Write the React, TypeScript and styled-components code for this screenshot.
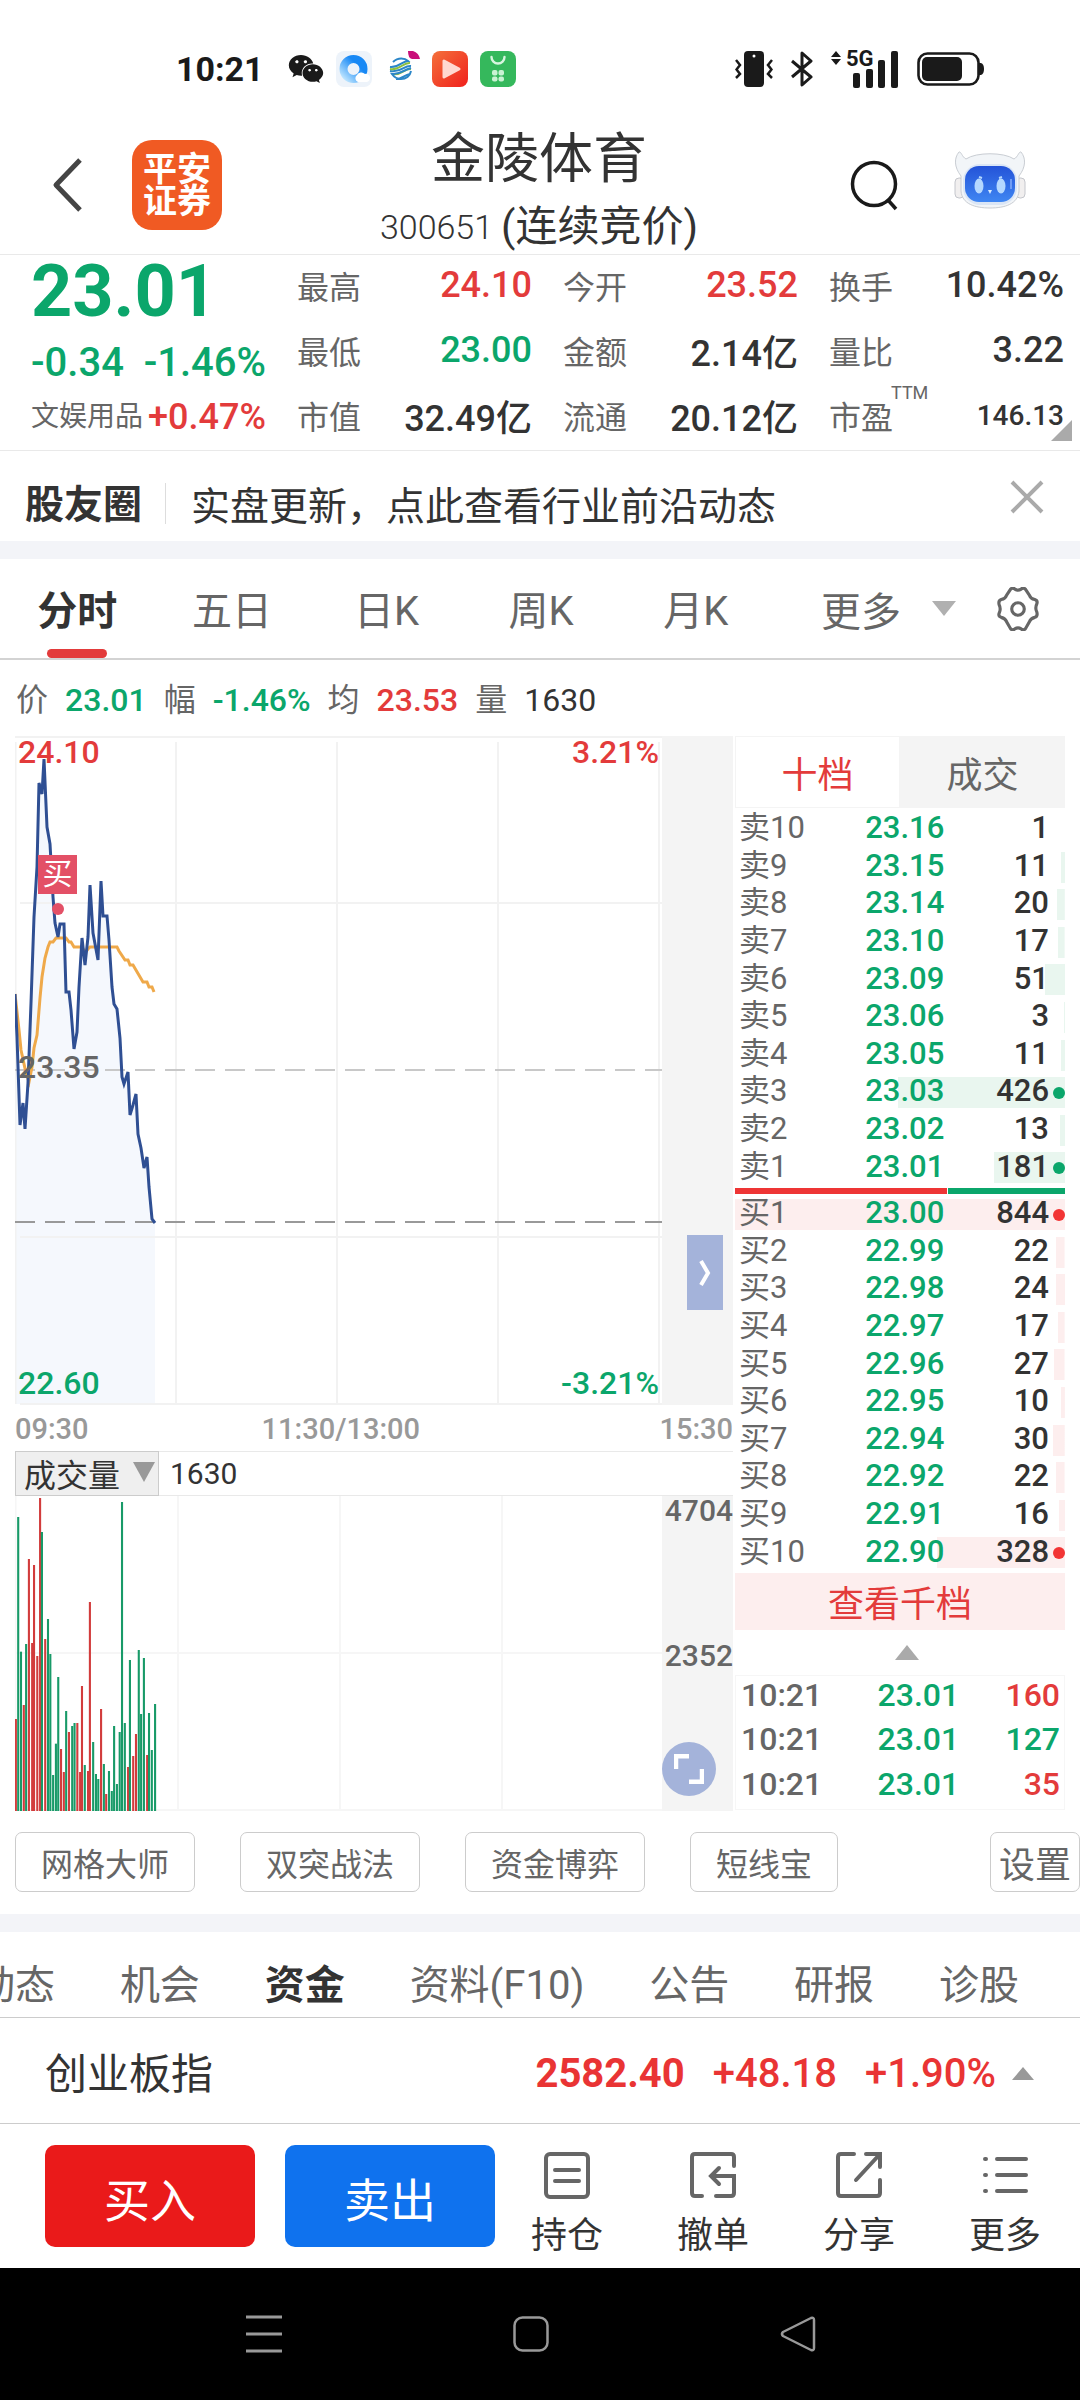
import React from "react";
import styled, { createGlobalStyle } from "styled-components";
import { FaWeixin } from "react-icons/fa";

const c = {
  green: "#0ba66b",
  red: "#e33b3b",
  ink: "#333333",
  sub: "#666666",
  mute: "#999999",
  line: "#e9e9e9",
  band: "#f3f4f8",
  panel: "#f4f4f4",
};

const Global = createGlobalStyle`
  * { box-sizing: border-box; }
  body { margin: 0; background: #fff; }
  body, button, select {
    font-family: Roboto, "Noto Sans CJK SC", sans-serif;
    color: ${c.ink};
  }
  button { border: 0; padding: 0; background: none; cursor: pointer; }
  svg { display: block; flex: none; }
`;

const Page = styled.div`
  display: flex;
  flex-direction: column;
  overflow: hidden;
`;

/* ---------- status bar ---------- */
const StatusBar = styled.div`
  display: flex;
  align-items: center;
  justify-content: space-between;
  padding: 24px 96px 0 176px;
  height: 114px;
`;
const StatusGroup = styled.div`
  display: flex;
  align-items: center;
  gap: ${(p: { $gap: number }) => p.$gap}px;
`;
const Clock = styled.span`
  font-size: 34px;
  font-weight: 700;
  color: #1a1a1a;
  margin-right: 12px;
`;

/* ---------- header ---------- */
const Header = styled.header`
  display: grid;
  grid-template-columns: 1fr auto 1fr;
  align-items: center;
  padding: 3px 54px 2px 52px;
  border-bottom: 1px solid ${c.line};
`;
const HeaderSide = styled.div`
  display: flex;
  align-items: center;
  justify-content: ${(p: { $end?: boolean }) => (p.$end ? "flex-end" : "flex-start")};
  gap: ${(p: { $end?: boolean }) => (p.$end ? 54 : 50)}px;
`;
const Brand = styled.a`
  width: 90px;
  height: 90px;
  border-radius: 20px;
  background: #f05a23;
  color: #fff;
  font-size: 34px;
  line-height: 32px;
  font-weight: 700;
  text-decoration: none;
  text-align: center;
  padding: 13px 9px;
`;
const Heading = styled.div`
  text-align: center;
  padding-top: 10px;
`;
const StockName = styled.h1`
  margin: 0 0 9px;
  font-size: 54px;
  line-height: 66px;
  font-weight: 400;
`;
const StockCode = styled.p`
  margin: 0;
  display: flex;
  align-items: center;
  gap: 8px;
  font-size: 42px;
  line-height: 50px;
`;
const CodeDigits = styled.span`
  font-size: 34px;
  font-weight: 300;
`;

/* ---------- quote ---------- */
const Quote = styled.section`
  display: grid;
  grid-template-columns: repeat(4, 1fr);
  column-gap: 31px;
  padding: 0 16px 5px 31px;
  border-bottom: 1px solid ${c.line};
`;
const QuoteColumn = styled.dl`
  margin: 0;
  display: grid;
  grid-auto-rows: 60px;
  row-gap: 5px;
`;
const QuoteItem = styled.div`
  position: relative;
  display: flex;
  align-items: center;
  justify-content: space-between;
  white-space: nowrap;
`;
const QuoteLabel = styled.dt`
  font-size: 32px;
  color: ${c.sub};
`;
const QuoteValue = styled.dd<{ $color?: string; $small?: boolean }>`
  margin: 0;
  font-size: ${(p) => (p.$small ? 28 : 36)}px;
  font-weight: 500;
  color: ${(p) => p.$color || c.ink};
`;
const Ttm = styled.sup`
  position: absolute;
  left: 62px;
  top: -4px;
  font-size: 18px;
  line-height: 24px;
  color: ${c.sub};
`;
const Corner = styled.svg`
  position: absolute;
  right: -8px;
  bottom: 4px;
`;
const Price = styled.div`
  font-size: 72px;
  line-height: 74px;
  font-weight: 700;
  color: ${c.green};
`;
const Change = styled.div`
  display: flex;
  justify-content: space-between;
  font-size: 40px;
  line-height: 68px;
  font-weight: 500;
  color: ${c.green};
`;
const Sector = styled.div`
  display: flex;
  align-items: center;
  justify-content: space-between;
  font-size: 28px;
  line-height: 40px;
  color: ${c.sub};
  white-space: nowrap;
`;
const SectorChange = styled.span`
  font-size: 36px;
  font-weight: 500;
  color: ${c.red};
`;

/* ---------- notice ---------- */
const Notice = styled.section`
  display: flex;
  align-items: center;
  height: 90px;
  padding: 14px 36px 0 25px;
  font-size: 39px;
`;
const NoticeTitle = styled.strong`
  padding: 3px 23px 0 0;
  line-height: 38px;
  border-right: 1px solid #dddddd;
`;
const NoticeText = styled.a`
  flex: 1;
  padding-left: 25px;
  color: inherit;
  text-decoration: none;
`;
const Close = styled.button`
  padding-bottom: 12px;
`;
const Band = styled.div`
  height: 18px;
  background: ${c.band};
`;

/* ---------- period tabs ---------- */
const PeriodBar = styled.nav`
  display: grid;
  grid-template-columns: 773fr 307fr;
  height: 101px;
  border-bottom: 2px solid #d3d3d3;
`;
const Periods = styled.div`
  display: grid;
  grid-template-columns: repeat(5, 1fr);
`;
const Period = styled.button<{ $on?: boolean }>`
  position: relative;
  padding-bottom: 2px;
  font-size: 40px;
  font-weight: ${(p) => (p.$on ? 700 : 400)};
  color: ${(p) => (p.$on ? c.ink : c.sub)};
  &::after {
    content: "";
    display: ${(p) => (p.$on ? "block" : "none")};
    position: absolute;
    left: 50%;
    bottom: 0;
    width: 60px;
    height: 9px;
    margin-left: -30px;
    border-radius: 5px;
    background: ${c.red};
  }
`;
const PeriodExtra = styled.div`
  display: flex;
  align-items: center;
  justify-content: space-between;
  padding: 0 40px 0 48px;
`;
const MoreButton = styled.button`
  display: flex;
  align-items: center;
  gap: 31px;
  font-size: 40px;
  color: ${c.sub};
`;

/* ---------- legend ---------- */
const Legend = styled.div`
  display: flex;
  gap: 17px;
  padding: 3px 16px 0;
  font-size: 32px;
  line-height: 74px;
  height: 76px;
  color: ${c.sub};
`;
const LegendValue = styled.span<{ $color: string; $plain?: boolean }>`
  font-weight: ${(p) => (p.$plain ? 400 : 500)};
  color: ${(p) => p.$color};
`;

/* ---------- charts ---------- */
const Board = styled.main`
  display: grid;
  grid-template-columns: 718fr 330fr;
  column-gap: 2px;
  padding: 0 15px;
`;
const ChartColumn = styled.section`
  display: flex;
  flex-direction: column;
  min-width: 0;
`;
const Plot = styled.div<{ $h: number }>`
  position: relative;
  display: grid;
  grid-template-columns: 647fr 71fr;
  height: ${(p) => p.$h}px;
`;
const PlotSvg = styled.svg`
  width: 100%;
  height: 100%;
`;
const Gutter = styled.div`
  position: relative;
  background: ${c.panel};
`;
const AxisLabel = styled.span<{ $top: number; $color: string; $right?: boolean }>`
  position: absolute;
  top: ${(p) => p.$top}px;
  ${(p) => (p.$right ? "right: 74px;" : "left: 3px;")}
  font-size: 32px;
  line-height: 32px;
  font-weight: 500;
  color: ${(p) => p.$color};
`;
const BuyMark = styled.span`
  position: absolute;
  left: 23px;
  top: 119px;
  width: 39px;
  height: 39px;
  background: #e35066;
  color: #fff;
  font-size: 30px;
  line-height: 38px;
  text-align: center;
`;
const Expander = styled.button`
  position: absolute;
  right: 10px;
  top: 499px;
  width: 36px;
  height: 75px;
  background: #a4b3da;
  display: grid;
  place-items: center;
`;
const FullScreen = styled.button`
  position: absolute;
  left: 0;
  bottom: 15px;
  width: 54px;
  height: 54px;
  border-radius: 50%;
  background: #a4b3da;
  display: grid;
  place-items: center;
`;
const TimeAxis = styled.div`
  display: grid;
  grid-template-columns: auto 1fr auto;
  font-size: 29px;
  line-height: 46px;
  padding-top: 1px;
  font-weight: 500;
  color: ${c.mute};
`;
const Noon = styled.span`
  padding-left: 173px;
`;
const VolumeBar = styled.div`
  display: flex;
  align-items: center;
  height: 45px;
  border: 1px solid ${c.line};
  border-width: 1px 0;
  font-size: 30px;
  gap: 11px;
  margin-top: -1px;
`;
const Picker = styled.label`
  position: relative;
  display: block;
  margin: -1px 0;
`;
const PickerSelect = styled.select`
  appearance: none;
  display: block;
  width: 144px;
  height: 45px;
  padding: 4px 0 0 8px;
  border: 1px solid #cccccc;
  border-radius: 0;
  background: #efefef;
  font-size: 32px;
  line-height: 38px;
`;
const PickerArrow = styled.svg`
  position: absolute;
  right: 4px;
  top: 11px;
  pointer-events: none;
`;
const ScaleLabel = styled.span<{ $top: number }>`
  position: absolute;
  right: 0;
  top: ${(p) => p.$top}px;
  font-size: 30px;
  line-height: 30px;
  font-weight: 500;
  color: ${c.sub};
`;

/* ---------- order book ---------- */
const BookColumn = styled.section`
  display: flex;
  flex-direction: column;
`;
const BookTabs = styled.div`
  display: grid;
  grid-template-columns: 1fr 1fr;
  height: 72px;
  margin-bottom: 3px;
`;
const BookTab = styled.button<{ $on?: boolean }>`
  border: 1px solid ${c.panel};
  background: ${(p) => (p.$on ? "#fff" : c.panel)};
  color: ${(p) => (p.$on ? c.red : c.sub)};
  font-size: 36px;
`;
const Ladder = styled.table`
  width: 100%;
  height: 376px;
  border-collapse: collapse;
  table-layout: fixed;
`;
const Level = styled.tr`
  background-repeat: no-repeat;
  background-position: right 3px;
`;
const Cell = styled.td<{ $align?: string; $color?: string; $plain?: boolean }>`
  padding: 0 0 4px 4px;
  font-size: 31px;
  line-height: 31px;
  text-align: ${(p) => p.$align || "left"};
  font-weight: ${(p) => (p.$plain ? 400 : 500)};
  color: ${(p) => p.$color || c.ink};
`;
const DotCell = styled.td`
  width: 16px;
  padding: 0;
`;
const Dot = styled.i<{ $color: string }>`
  display: block;
  margin-left: auto;
  width: 12px;
  height: 12px;
  border-radius: 50%;
  background: ${(p) => p.$color};
`;
const Ratio = styled.div`
  display: grid;
  grid-template-columns: 212fr 117fr;
  gap: 1px;
  height: 6px;
  margin: 1px 0 2px;
`;
const RatioPart = styled.span<{ $color: string }>`
  background: ${(p) => p.$color};
`;
const DepthButton = styled.button`
  height: 57px;
  margin-top: 1px;
  padding-top: 6px;
  background: #fdeeee;
  color: ${c.red};
  font-size: 36px;
  line-height: 50px;
`;
const Fold = styled.button`
  display: grid;
  place-items: center;
  height: 45px;
  padding-left: 14px;
`;
const Trades = styled.table`
  width: 100%;
  height: 135px;
  border: 1px solid #f6f6f6;
  border-spacing: 0;
`;
const TradeCell = styled.td<{ $align?: string; $color: string }>`
  padding: 0 4px 6px 5px;
  font-size: 32px;
  line-height: 32px;
  font-weight: 500;
  text-align: ${(p) => p.$align || "left"};
  color: ${(p) => p.$color};
`;

/* ---------- tools ---------- */
const Tools = styled.div`
  display: flex;
  gap: 45px;
  padding: 21px 0 22px 15px;
`;
const Tool = styled.button`
  height: 60px;
  padding: 0 25px;
  border: 1px solid #cccccc;
  border-radius: 7px;
  font-size: 32px;
  color: ${c.sub};
  white-space: nowrap;
`;
const SettingsTool = styled(Tool)`
  margin-left: auto;
  padding: 0 8px;
  font-size: 36px;
`;

/* ---------- section tabs ---------- */
const SectionTabs = styled.nav`
  display: flex;
  justify-content: space-between;
  margin-left: -25px;
  padding: 4px 61px 0 0;
  height: 86px;
  border-bottom: 1px solid #cccccc;
`;
const SectionTab = styled.button<{ $on?: boolean }>`
  padding-top: 10px;
  font-size: 40px;
  white-space: nowrap;
  font-weight: ${(p) => (p.$on ? 700 : 400)};
  color: ${(p) => (p.$on ? c.ink : c.sub)};
`;

/* ---------- index strip ---------- */
const IndexStrip = styled.section`
  display: flex;
  align-items: center;
  gap: 28px;
  height: 106px;
  padding: 5px 46px 0 45px;
  border-bottom: 1px solid #cccccc;
  font-size: 40px;
  font-weight: 500;
  color: #e93434;
`;
const IndexName = styled.span`
  flex: 1;
  padding-bottom: 6px;
  font-size: 42px;
  font-weight: 400;
  color: ${c.ink};
`;
const IndexValue = styled.strong`
  font-weight: 700;
`;
const IndexRate = styled.span`
  display: flex;
  align-items: center;
  gap: 16px;
`;

/* ---------- action bar ---------- */
const ActionBar = styled.footer`
  display: grid;
  grid-template-columns: 210fr 210fr 540fr;
  column-gap: 30px;
  align-items: start;
  padding: 21px 15px 9px 45px;
`;
const Deal = styled.button<{ $color: string }>`
  height: 102px;
  padding-top: 2px;
  border-radius: 10px;
  background: ${(p) => p.$color};
  color: #fff;
  font-size: 46px;
`;
const Actions = styled.div`
  display: flex;
  gap: 74px;
  padding-left: 6px;
`;
const Action = styled.button`
  display: flex;
  flex-direction: column;
  align-items: center;
  gap: 14px;
  padding-top: 6px;
  font-size: 36px;
  line-height: 46px;
  white-space: nowrap;
`;

/* ---------- system navigation ---------- */
const SystemNav = styled.div`
  display: flex;
  justify-content: center;
  align-items: center;
  gap: 231px;
  height: 132px;
  padding-right: 18px;
  background: #000;
`;

/* ---------- data ---------- */
const sells: [string, string, number][] = [
  ["卖10", "23.16", 1], ["卖9", "23.15", 11], ["卖8", "23.14", 20], ["卖7", "23.10", 17],
  ["卖6", "23.09", 51], ["卖5", "23.06", 3], ["卖4", "23.05", 11], ["卖3", "23.03", 426],
  ["卖2", "23.02", 13], ["卖1", "23.01", 181],
];
const buys: [string, string, number][] = [
  ["买1", "23.00", 844], ["买2", "22.99", 22], ["买3", "22.98", 24], ["买4", "22.97", 17],
  ["买5", "22.96", 27], ["买6", "22.95", 10], ["买7", "22.94", 30], ["买8", "22.92", 22],
  ["买9", "22.91", 16], ["买10", "22.90", 328],
];
const MAX_LOT = 844;

const quoteColumns = [
  [["最高", "24.10", c.red], ["最低", "23.00", c.green], ["市值", "32.49亿", c.ink]],
  [["今开", "23.52", c.red], ["金额", "2.14亿", c.ink], ["流通", "20.12亿", c.ink]],
  [["换手", "10.42%", c.ink], ["量比", "3.22", c.ink], ["市盈", "146.13", c.ink]],
];

const pricePath =
  "0,258 2,301 5,389 8,367 10,393 13,347 16,267 19,181 22,131 24,47 27,58 29,23 32,91 35,108 38,161 40,187 43,201 45,188 49,188 51,256 54,256 56,274 59,313 62,296 64,251 67,202 70,229 73,201 75,149 78,197 83,224 86,145 88,180 92,180 94,204 97,251 99,268 102,273 105,302 107,341 109,348 113,336 115,379 118,369 121,358 123,398 126,412 129,432 132,421 134,451 137,483 140,487";
const averagePath =
  "0,258 4,294 6,314 11,337 14,346 17,331 19,312 22,299 25,262 27,241 30,222 33,211 35,206 38,206 41,202 51,202 54,206 56,206 59,211 67,211 70,217 73,213 75,211 102,211 104,215 110,224 113,224 115,229 118,229 128,246 132,246 134,251 137,251 139,256";

// Minute volumes: centre x, top y and direction of each bar.
const volumes: [number, number, 0 | 1][] = [
  [34, 864, 1], [39, 258, 0], [45, 662, 0], [51, 822, 1], [56, 639, 0], [62, 384, 1], [69, 636, 1],
  [73, 402, 1], [80, 675, 1], [86, 201, 1], [90, 303, 0], [97, 624, 1], [103, 564, 0], [108, 669, 0],
  [114, 1032, 0], [120, 938, 0], [125, 738, 0], [131, 954, 1], [137, 1023, 1], [142, 840, 0],
  [148, 903, 1], [155, 885, 0], [160, 876, 0], [166, 876, 1], [172, 1023, 1], [176, 765, 1],
  [182, 1002, 0], [189, 1020, 1], [193, 513, 1], [200, 933, 0], [206, 1029, 0], [211, 1044, 0],
  [217, 834, 1], [223, 999, 0], [228, 1089, 1], [234, 1020, 0], [240, 1080, 0], [245, 885, 0],
  [251, 1059, 0], [257, 903, 0], [262, 213, 0], [268, 876, 0], [275, 1008, 1], [279, 687, 0],
  [286, 975, 1], [292, 909, 1], [298, 657, 0], [303, 849, 0], [309, 681, 0], [316, 972, 1],
  [320, 846, 0], [326, 957, 0], [333, 819, 0],
];

/* ---------- icons ---------- */
const Tri = ({ w, h, up, fill = c.mute }: { w: number; h: number; up?: boolean; fill?: string }) => (
  <svg width={w} height={h} viewBox="0 0 10 10" preserveAspectRatio="none" fill={fill}>
    <path d={up ? "M5 0 10 10H0z" : "M0 0h10L5 10z"} />
  </svg>
);

const BrowserIcon = () => (
  <svg width="36" height="36" viewBox="0 0 36 36">
    <defs>
      <linearGradient id="q" x1="1" y1="0" x2="0" y2="1">
        <stop offset="0.3" stopColor="#1788f5" />
        <stop offset="1" stopColor="#bfe6ff" />
      </linearGradient>
    </defs>
    <rect width="36" height="36" rx="8" fill="#edf3fa" />
    <circle cx="17.500" cy="18" r="10" fill="none" stroke="url(#q)" strokeWidth="8" />
    <path d="M22 31a4 4 0 0 1-1-7 5 5 0 0 1 8-1 4 4 0 0 1 2 8z" fill="#fff" />
  </svg>
);
const MobileIcon = () => (
  <svg width="36" height="36" viewBox="0 0 36 36" fill="none" strokeWidth="2">
    <path d="M9 11c5-5 12-4 15-1-6 0-9 7-18 6M27 15c-7-1-9 7-21 5" stroke="#2b86c8" />
    <path d="M26 12c-7-1-10 8-20 6M27 18c-7-1-9 7-19 5" stroke="#8cbf3f" />
    <path d="M27 20c-1 5-5 8-10 8-4 0-7-2-9-5 8 1 11-4 19-6M12 28c6 0 8-4 14-5" stroke="#2b86c8" />
    <path d="M24 0h5q6 2 7 8h-8q-4-1-4-8z" fill="#c9107a" />
  </svg>
);
const VideoIcon = () => (
  <svg width="36" height="36" viewBox="0 0 36 36">
    <defs>
      <linearGradient id="v" x1="0" y1="0" x2="1" y2="1">
        <stop offset="0" stopColor="#f4703a" />
        <stop offset="1" stopColor="#f0201c" />
      </linearGradient>
    </defs>
    <rect width="36" height="36" rx="8" fill="url(#v)" />
    <path d="M12 10v16l15-8z" fill="#ffd9d0" stroke="#ffd9d0" strokeWidth="3" strokeLinejoin="round" />
  </svg>
);
const StoreIcon = () => (
  <svg width="36" height="36" viewBox="0 0 36 36">
    <rect width="36" height="36" rx="8" fill="#35b85c" />
    <path d="M11.500 6a6.500 6.500 0 0 0 13 0" fill="none" stroke="#d8f5df" strokeWidth="2.400" strokeLinecap="round" />
    <g fill="#c9f2d3">
      <rect x="12" y="19" width="5.500" height="5.500" rx="2" />
      <rect x="18.500" y="19" width="5.500" height="5.500" rx="2" />
      <rect x="12" y="25.500" width="5.500" height="5" rx="2" />
      <rect x="18.500" y="25.500" width="5.500" height="5" rx="2" />
    </g>
  </svg>
);
const VibrateIcon = () => (
  <svg width="38" height="36" viewBox="0 0 38 36" fill="none" stroke="#1a1a1a" strokeWidth="2.500">
    <rect x="9" y="0" width="20" height="36" rx="4" fill="#1a1a1a" stroke="none" />
    <circle cx="19" cy="5" r="1.500" fill="#fff" stroke="none" />
    <path d="M1 9l4 5-3.500 4.500L5 23l-4 4M37 9l-4 5 3.500 4.500L33 23l4 4" />
  </svg>
);
const BluetoothIcon = () => (
  <svg width="22" height="36" viewBox="0 0 22 36" fill="none" stroke="#1a1a1a" strokeWidth="3">
    <path d="M1 10l19 16-9 8V2l9 8L1 26" strokeLinejoin="round" />
  </svg>
);
const Signal = styled.span`
  position: relative;
  width: 68px;
  height: 38px;
`;
const SignalTag = styled.span`
  position: absolute;
  left: 15px;
  top: 0;
  font-size: 22px;
  line-height: 18px;
  font-weight: 700;
  color: #1a1a1a;
`;
const BatteryIcon = () => (
  <svg width="67" height="34" viewBox="0 0 67 34">
    <rect x="1.500" y="1.500" width="60" height="31" rx="9" fill="none" stroke="#1a1a1a" strokeWidth="2.600" />
    <rect x="5" y="5" width="40" height="24" rx="5" fill="#1a1a1a" />
    <path d="M62 11h2q3 1 3 6t-3 6h-2z" fill="#1a1a1a" />
  </svg>
);
const RobotIcon = () => (
  <svg width="72" height="68" viewBox="0 0 72 68">
    <defs>
      <linearGradient id="face" x1="0" y1="0" x2="0" y2="1">
        <stop offset="0" stopColor="#2453d8" />
        <stop offset="1" stopColor="#3f86f2" />
      </linearGradient>
    </defs>
    <rect x="1" y="27" width="9" height="20" rx="4" fill="#f1efef" stroke="#c4c6cc" />
    <rect x="62" y="27" width="9" height="20" rx="4" fill="#f1efef" stroke="#c4c6cc" />
    <path
      d="M5 1c2-1 3 5 7 7 10-7 38-7 48 0 4-2 5-8 7-7 5 6 5 15-2 24v15c-1 13-14 17-29 17S8 53 7 40V25C0 16 0 7 5 1z"
      fill="#f2f5f8"
      stroke="#c9cdd3"
    />
    <rect x="9" y="13" width="54" height="41" rx="17" fill="#dbe6f5" />
    <rect x="11" y="15" width="50" height="36" rx="14" fill="url(#face)" />
    <ellipse cx="25" cy="35" rx="4.500" ry="7.500" fill="#b5d8ff" />
    <ellipse cx="47" cy="35" rx="4.500" ry="7.500" fill="#b5d8ff" />
    <path d="M25 26l3 1M45 27l3-1" stroke="#b5d8ff" strokeWidth="2" />
    <path d="M57 28v10" stroke="#6f9cf5" strokeWidth="2" />
    <path d="M34 39h4l-2 4z" fill="#d8ebff" />
  </svg>
);
const gearPath =
  "M15 3Q17 1 19 3Q22 5 25 3Q27 1 29 3L33 9Q34 12 38 13Q41 14 40 17Q38 21 40 25Q41 29 38 30Q34 31 33 34L29 41Q27 43 25 41Q22 39 19 41Q17 43 15 41L11 34Q10 31 6 30Q3 29 4 26Q6 22 4 18Q3 14 6 13Q10 12 11 9Z";

const App = () => (
  <>
    <Global />
    <Page>
      <StatusBar>
        <StatusGroup $gap={12}>
          <Clock>10:21</Clock>
          <FaWeixin size={36} color="#1a1a1a" />
          <BrowserIcon />
          <MobileIcon />
          <VideoIcon />
          <StoreIcon />
        </StatusGroup>
        <StatusGroup $gap={18}>
          <VibrateIcon />
          <BluetoothIcon />
          <Signal>
            <svg width="68" height="38" viewBox="0 0 68 38" fill="#1a1a1a">
              <path d="M0 7 5 1l5 6zM0 9h10l-5 6z" />
              <rect x="22" y="23" width="7" height="15" rx="2" />
              <rect x="35" y="19" width="7" height="19" rx="2" />
              <rect x="47" y="10" width="7" height="28" rx="2" />
              <rect x="60" y="1" width="7" height="37" rx="2" />
            </svg>
            <SignalTag>5G</SignalTag>
          </Signal>
          <BatteryIcon />
        </StatusGroup>
      </StatusBar>

      <Header>
        <HeaderSide>
          <button aria-label="返回">
            <svg width="30" height="54" viewBox="0 0 30 54" fill="none" stroke="#444" strokeWidth="5">
              <path d="M28 2 4 27l24 25" strokeLinejoin="round" />
            </svg>
          </button>
          <Brand href="#">平安证券</Brand>
        </HeaderSide>
        <Heading>
          <StockName>金陵体育</StockName>
          <StockCode>
            <CodeDigits>300651</CodeDigits>
            <span>(连续竞价)</span>
          </StockCode>
        </Heading>
        <HeaderSide $end>
          <button aria-label="搜索">
            <svg width="50" height="52" viewBox="0 0 50 52" fill="none" stroke="#1a1a1a" strokeWidth="3.500">
              <circle cx="24" cy="25" r="21.500" />
              <path d="M38 41l8 9" />
            </svg>
          </button>
          <button aria-label="智能助手">
            <RobotIcon />
          </button>
        </HeaderSide>
      </Header>

      <Quote>
        <div>
          <Price>23.01</Price>
          <Change>
            <span>-0.34</span>
            <span>-1.46%</span>
          </Change>
          <Sector>
            文娱用品<SectorChange>+0.47%</SectorChange>
          </Sector>
        </div>
        {quoteColumns.map((col, i) => (
          <QuoteColumn key={i}>
            {col.map(([label, value, color]) => (
              <QuoteItem key={label}>
                <QuoteLabel>{label}</QuoteLabel>
                <QuoteValue $color={color} $small={label === "市盈"}>
                  {value}
                </QuoteValue>
                {label === "市盈" && (
                  <>
                    <Ttm>TTM</Ttm>
                    <Corner width="21" height="21" viewBox="0 0 21 21">
                      <path d="M21 0v21H0z" fill="#aaa" />
                    </Corner>
                  </>
                )}
              </QuoteItem>
            ))}
          </QuoteColumn>
        ))}
      </Quote>

      <Notice>
        <NoticeTitle>股友圈</NoticeTitle>
        <NoticeText href="#">实盘更新，点此查看行业前沿动态</NoticeText>
        <Close aria-label="关闭">
          <svg width="34" height="34" viewBox="0 0 34 34" stroke="#aaa" strokeWidth="4">
            <path d="M2 2l30 30M32 2 2 32" />
          </svg>
        </Close>
      </Notice>
      <Band />

      <PeriodBar>
        <Periods>
          <Period $on>分时</Period>
          <Period>五日</Period>
          <Period>日K</Period>
          <Period>周K</Period>
          <Period>月K</Period>
        </Periods>
        <PeriodExtra>
          <MoreButton>
            更多
            <Tri w={24} h={15} fill="#b0b0b0" />
          </MoreButton>
          <button aria-label="图表设置">
            <svg width="44" height="44" viewBox="1 1 42 42" fill="none" stroke="#666" strokeWidth="3">
              <path d={gearPath} />
              <circle cx="22" cy="22" r="6" />
            </svg>
          </button>
        </PeriodExtra>
      </PeriodBar>

      <Legend>
        价<LegendValue $color={c.green}>23.01</LegendValue>
        幅<LegendValue $color={c.green}>-1.46%</LegendValue>
        均<LegendValue $color={c.red}>23.53</LegendValue>
        量<LegendValue $color={c.ink} $plain>1630</LegendValue>
      </Legend>

      <Board>
        <ChartColumn>
          <Plot $h={669}>
            <PlotSvg viewBox="0 0 647 669" preserveAspectRatio="none" fill="none">
              <path d={`M0,668 L${pricePath} V668Z`} fill="#f5f8fd" />
              <path d="M0.500 6V668M161 6V668M322 6V668M483 6V668M644 6V668M0 1H647M5 167H647M5 501H647M5 668H647" stroke="#f2f2f2" strokeWidth="2" />
              <path d="M0 334H647" stroke="#c8c8c8" strokeWidth="2" strokeDasharray="20 10" />
              <path d="M0 486H647" stroke="#999" strokeWidth="2" strokeDasharray="20 10" />
              <polyline points={averagePath} stroke="#efa94a" strokeWidth="3" />
              <polyline points={pricePath} stroke="#2f4f93" strokeWidth="3" />
              <circle cx="43" cy="173" r="6" fill="#e35066" />
            </PlotSvg>
            <Gutter>
              <Expander aria-label="展开">
                <svg width="14" height="26" viewBox="0 0 14 26" fill="none" stroke="#fff" strokeWidth="4">
                  <path d="M3 1l7 12-7 12" />
                </svg>
              </Expander>
            </Gutter>
            <AxisLabel $top={0} $color={c.red}>24.10</AxisLabel>
            <AxisLabel $top={0} $color={c.red} $right>3.21%</AxisLabel>
            <AxisLabel $top={315} $color={c.sub}>23.35</AxisLabel>
            <AxisLabel $top={631} $color={c.green}>22.60</AxisLabel>
            <AxisLabel $top={631} $color={c.green} $right>-3.21%</AxisLabel>
            <BuyMark>买</BuyMark>
          </Plot>
          <TimeAxis>
            <span>09:30</span>
            <Noon>11:30/13:00</Noon>
            <span>15:30</span>
          </TimeAxis>
          <VolumeBar>
            <Picker>
              <PickerSelect aria-label="指标" defaultValue="成交量">
                <option>成交量</option>
              </PickerSelect>
              <PickerArrow width="22" height="20" viewBox="0 0 22 20">
                <path d="M0 0h22L11 20z" fill="#999" />
              </PickerArrow>
            </Picker>
            <span>1630</span>
          </VolumeBar>
          <Plot $h={315}>
            <PlotSvg viewBox="0 0 647 315" preserveAspectRatio="none">
              <path d="M0.500 0V315M163 0V315M325 0V315M487 0V315M0 157H647M0 314H647" stroke="#f6f6f6" strokeWidth="2" />
              {volumes.map(([x, y, up]) => (
                <rect
                  key={x}
                  x={x / 2.148 - 16}
                  y={y / 3 - 65}
                  width="2.100"
                  height={380 - y / 3}
                  fill={up ? "#d23c3c" : "#189a68"}
                />
              ))}
            </PlotSvg>
            <Gutter>
              <ScaleLabel $top={0}>4704</ScaleLabel>
              <ScaleLabel $top={145}>2352</ScaleLabel>
              <FullScreen aria-label="全屏">
                <svg width="30" height="30" viewBox="0 0 30 30" fill="none" stroke="#fff" strokeWidth="4.500">
                  <path d="M2 15V2.300H15M28 15V27.700H15" />
                </svg>
              </FullScreen>
            </Gutter>
          </Plot>
        </ChartColumn>

        <BookColumn>
          <BookTabs>
            <BookTab $on>十档</BookTab>
            <BookTab>成交</BookTab>
          </BookTabs>
          <Book rows={sells} tint="#e9f6ef" dot="#0ba66b" />
          <Ratio>
            <RatioPart $color="#ee3535" />
            <RatioPart $color="#0ba66b" />
          </Ratio>
          <Book rows={buys} tint="#fdeeee" dot="#f23535" />
          <DepthButton>查看千档</DepthButton>
          <Fold aria-label="收起">
            <Tri w={24} h={15} up fill="#aaa" />
          </Fold>
          <Trades>
            <tbody>
              {[["160", c.red], ["127", c.green], ["35", c.red]].map(([lots, color]) => (
                <tr key={lots}>
                  <TradeCell $color={c.sub}>10:21</TradeCell>
                  <TradeCell $color={c.green} $align="center">23.01</TradeCell>
                  <TradeCell $color={color} $align="right">{lots}</TradeCell>
                </tr>
              ))}
            </tbody>
          </Trades>
        </BookColumn>
      </Board>

      <Tools>
        <Tool>网格大师</Tool>
        <Tool>双突战法</Tool>
        <Tool>资金博弈</Tool>
        <Tool>短线宝</Tool>
        <SettingsTool>设置</SettingsTool>
      </Tools>
      <Band />

      <SectionTabs>
        {["动态", "机会", "资金", "资料(F10)", "公告", "研报", "诊股"].map((t) => (
          <SectionTab key={t} $on={t === "资金"}>{t}</SectionTab>
        ))}
      </SectionTabs>

      <IndexStrip>
        <IndexName>创业板指</IndexName>
        <IndexValue>2582.40</IndexValue>
        <span>+48.18</span>
        <IndexRate>
          +1.90%
          <Tri w={22} h={13} up />
        </IndexRate>
      </IndexStrip>

      <ActionBar>
        <Deal $color="#ea1a1a">买入</Deal>
        <Deal $color="#0f72ee">卖出</Deal>
        <Actions>
          <Action>
            <svg width="48" height="48" viewBox="0 0 48 48" fill="none" stroke="#666" strokeWidth="4">
              <rect x="3" y="3" width="42" height="43" rx="4" />
              <path d="M12 19h24M12 30h24" strokeLinecap="round" />
            </svg>
            持仓
          </Action>
          <Action>
            <svg width="48" height="48" viewBox="0 0 48 48" fill="none" stroke="#666" strokeWidth="4" strokeLinecap="round">
              <path d="M45 15V6q0-3-3-3H6Q3 3 3 6v36q0 3 3 3h7M27 45h15q3 0 3-3V25H23M30 17l-8 8 8 8" />
            </svg>
            撤单
          </Action>
          <Action>
            <svg width="48" height="48" viewBox="0 0 48 48" fill="none" stroke="#666" strokeWidth="4" strokeLinecap="round">
              <path d="M19 3H6Q3 3 3 6v36q0 3 3 3h36q3 0 3-3V29M31 3h14v13M45 3 21 29" />
            </svg>
            分享
          </Action>
          <Action>
            <svg width="48" height="48" viewBox="0 0 48 48" fill="none" stroke="#666" strokeWidth="4" strokeLinecap="round">
              <path d="M16 8h29M16 24h29M16 40h29M4 8h1M4 24h1M4 40h1" />
            </svg>
            更多
          </Action>
        </Actions>
      </ActionBar>

      <SystemNav>
        <button aria-label="最近任务">
          <svg width="36" height="38" viewBox="0 0 36 38" stroke="#999" strokeWidth="3">
            <path d="M0 2h36M0 19h36M0 36h36" />
          </svg>
        </button>
        <button aria-label="主页">
          <svg width="36" height="36" viewBox="0 0 36 36" fill="none" stroke="#999" strokeWidth="2.500">
            <rect x="1.500" y="1.500" width="33" height="33" rx="8" />
          </svg>
        </button>
        <button aria-label="返回上级">
          <svg width="36" height="36" viewBox="0 0 36 36" fill="none" stroke="#999" strokeWidth="2.500" strokeLinejoin="round">
            <path d="M31 2q3-1 3 2v28q0 3-3 2L3 20q-2-2 0-4z" />
          </svg>
        </button>
      </SystemNav>
    </Page>
  </>
);

function Book({ rows, tint, dot }: { rows: [string, string, number][]; tint: string; dot: string }) {
  return (
    <Ladder>
      <colgroup>
        <col />
        <col />
        <col />
        <col width="16" />
      </colgroup>
      <tbody>
        {rows.map(([name, price, lots]) => (
          <Level
            key={name}
            style={{
              backgroundImage: `linear-gradient(${tint}, ${tint})`,
              backgroundSize: `${(lots / MAX_LOT) * 100}% 31px`,
            }}
          >
            <Cell $plain $color={c.sub}>{name}</Cell>
            <Cell $align="right" $color={c.green}>{price}</Cell>
            <Cell $align="right">{lots}</Cell>
            <DotCell>{lots > 100 && <Dot $color={dot} />}</DotCell>
          </Level>
        ))}
      </tbody>
    </Ladder>
  );
}

export default App;
